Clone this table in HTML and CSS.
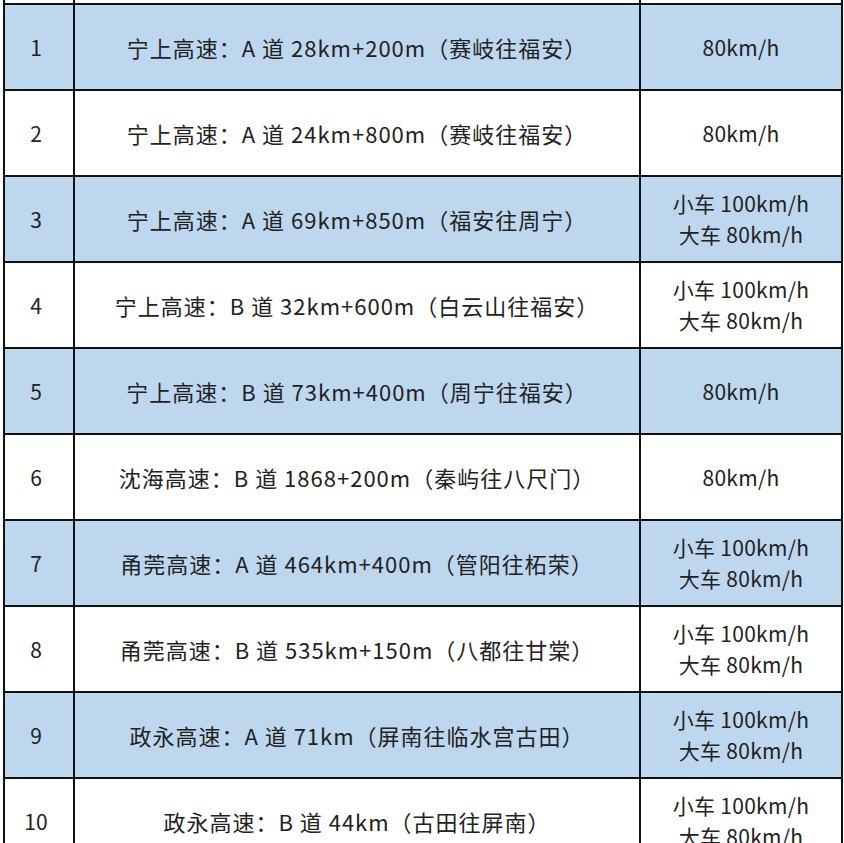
FILE: index.html
```html
<!DOCTYPE html>
<html lang="zh-CN">
<head>
<meta charset="utf-8">
<title>测速点</title>
<link rel="stylesheet" href="styles.css">
</head>
<body>
<div class="sheet">
  <div class="row top"><div class="cell"></div><div class="cell"></div><div class="cell"></div></div>

  <div class="row blue"><div class="cell num">1</div><div class="cell loc">宁上高速：A 道 28km+200m（赛岐往福安）</div><div class="cell spd">80km/h</div></div>
  <div class="row"><div class="cell num">2</div><div class="cell loc">宁上高速：A 道 24km+800m（赛岐往福安）</div><div class="cell spd">80km/h</div></div>
  <div class="row blue"><div class="cell num">3</div><div class="cell loc">宁上高速：A 道 69km+850m（福安往周宁）</div><div class="cell spd"><span>小车 100km/h</span><span>大车 80km/h</span></div></div>
  <div class="row"><div class="cell num">4</div><div class="cell loc">宁上高速：B 道 32km+600m（白云山往福安）</div><div class="cell spd"><span>小车 100km/h</span><span>大车 80km/h</span></div></div>
  <div class="row blue"><div class="cell num">5</div><div class="cell loc">宁上高速：B 道 73km+400m（周宁往福安）</div><div class="cell spd">80km/h</div></div>
  <div class="row"><div class="cell num">6</div><div class="cell loc">沈海高速：B 道 1868+200m（秦屿往八尺门）</div><div class="cell spd">80km/h</div></div>
  <div class="row blue"><div class="cell num">7</div><div class="cell loc">甬莞高速：A 道 464km+400m（管阳往柘荣）</div><div class="cell spd"><span>小车 100km/h</span><span>大车 80km/h</span></div></div>
  <div class="row"><div class="cell num">8</div><div class="cell loc">甬莞高速：B 道 535km+150m（八都往甘棠）</div><div class="cell spd"><span>小车 100km/h</span><span>大车 80km/h</span></div></div>
  <div class="row blue"><div class="cell num">9</div><div class="cell loc">政永高速：A 道 71km（屏南往临水宫古田）</div><div class="cell spd"><span>小车 100km/h</span><span>大车 80km/h</span></div></div>
  <div class="row"><div class="cell num">10</div><div class="cell loc">政永高速：B 道 44km（古田往屏南）</div><div class="cell spd"><span>小车 100km/h</span><span>大车 80km/h</span></div></div>
</div>
</body>
</html>
```

FILE: styles.css
```css
html, body {
  margin: 0;
  padding: 0;
  overflow: hidden;
  background: #ffffff;
}
body {
  font-family: "Noto Sans CJK SC", "Noto Sans", sans-serif;
  color: #222222;
}
.sheet {
  margin-left: 3px;
  width: 840px;
  border-left: 2px solid #111;
  box-sizing: border-box;
}
.row {
  display: grid;
  grid-template-columns: 70px 566px 202px;
  height: 86px;
}
.row.top {
  height: 5px;
}
.row.blue {
  background: #bdd7ee;
}
.cell {
  box-sizing: border-box;
  border-right: 2px solid #111;
  border-bottom: 2px solid #111;
  display: flex;
  flex-direction: column;
  align-items: center;
  justify-content: center;
  font-size: 21px;
  line-height: 31px;
  white-space: nowrap;
}
.cell.num {
  padding-right: 6px;
}
.cell.loc {
  font-size: 22px;
  letter-spacing: 1px;
}
.cell.spd {
  letter-spacing: 0.3px;
}
```
